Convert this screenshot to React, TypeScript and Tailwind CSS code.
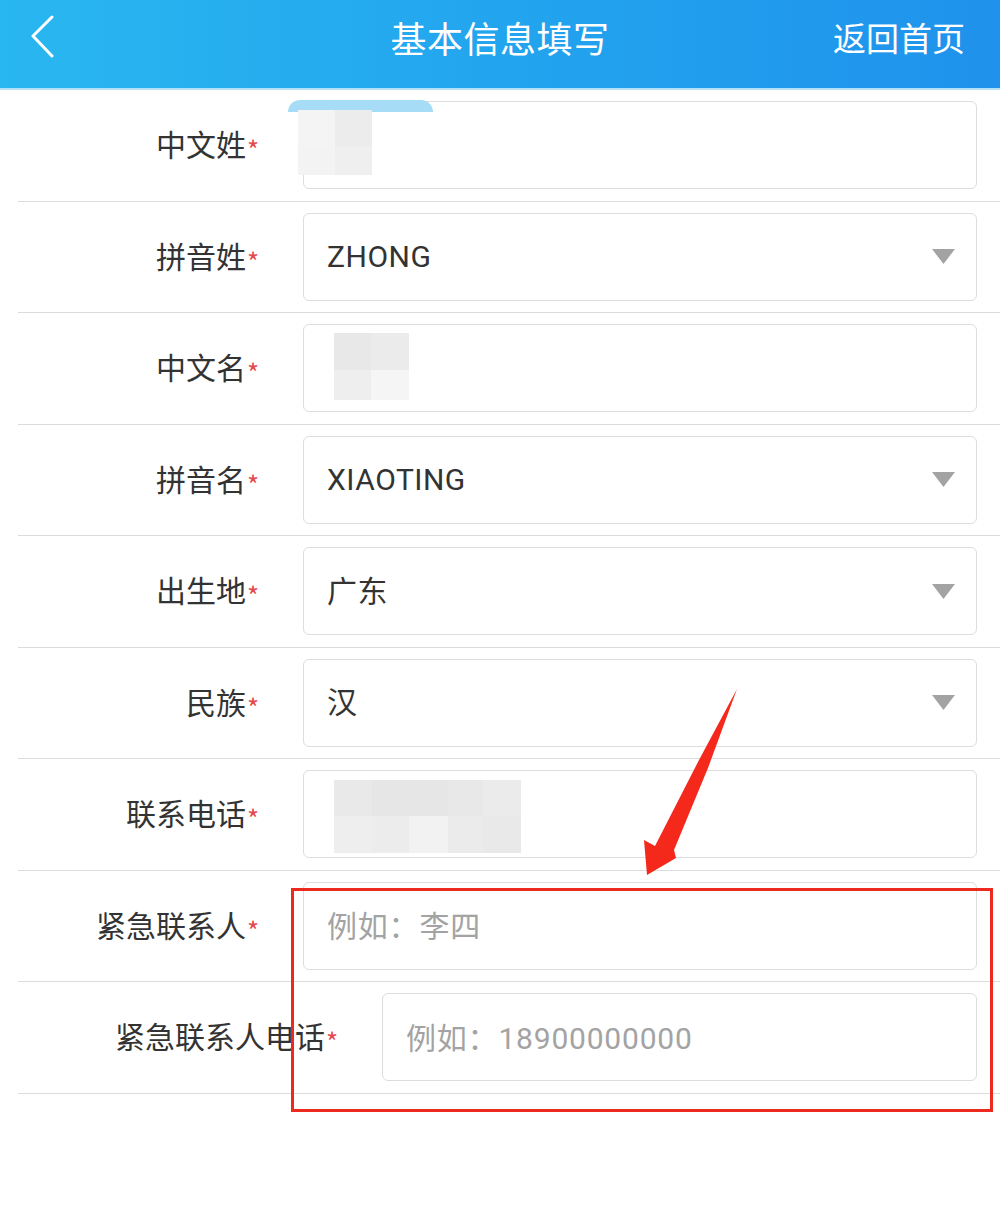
import React from 'react'

type Tile = { x: number; y: number; w: number; h: number; c: string }

interface RowProps {
  label: string
  value?: string
  placeholder?: string
  select?: boolean
  wideLabel?: boolean
  mosaic?: Tile[]
}

// pixelated blur blocks that hide personal data in the screenshot
const surnameMosaic: Tile[] = [
  { x: -16, y: -2, w: 145, h: 12, c: '#a6dcf5' },
  { x: -6, y: 8, w: 37, h: 36, c: '#f4f4f4' },
  { x: 31, y: 8, w: 37, h: 36, c: '#ececec' },
  { x: -6, y: 44, w: 37, h: 29, c: '#f3f3f3' },
  { x: 31, y: 44, w: 37, h: 29, c: '#efefef' },
]

const givenMosaic: Tile[] = [
  { x: 30, y: 8, w: 37, h: 37, c: '#e8e8e8' },
  { x: 67, y: 8, w: 38, h: 37, c: '#ebebeb' },
  { x: 30, y: 45, w: 37, h: 30, c: '#eeeeee' },
  { x: 67, y: 45, w: 38, h: 30, c: '#f5f5f5' },
]

const phoneMosaic: Tile[] = [
  { x: 30, y: 9, w: 38, h: 36, c: '#e9e9e9' },
  { x: 68, y: 9, w: 37, h: 36, c: '#e6e6e6' },
  { x: 105, y: 9, w: 39, h: 36, c: '#e6e6e6' },
  { x: 144, y: 9, w: 35, h: 36, c: '#e8e8e8' },
  { x: 179, y: 9, w: 38, h: 36, c: '#ebebeb' },
  { x: 30, y: 45, w: 38, h: 37, c: '#eeeeee' },
  { x: 68, y: 45, w: 37, h: 37, c: '#ececec' },
  { x: 105, y: 45, w: 39, h: 37, c: '#f2f2f2' },
  { x: 144, y: 45, w: 35, h: 37, c: '#ebebeb' },
  { x: 179, y: 45, w: 38, h: 37, c: '#e9e9e9' },
]

function FormRow({ label, value, placeholder, select, wideLabel, mosaic }: RowProps) {
  return (
    <div className="ml-[18px] h-[111.5px] border-b border-[#dcdcdc] flex items-center">
      <div
        className={
          wideLabel
            ? 'pl-[97px] shrink-0 flex items-center whitespace-nowrap'
            : 'w-[240px] shrink-0 flex items-center justify-end whitespace-nowrap'
        }
      >
        <span className="text-[30px] leading-none text-[#333333] -translate-y-[2px]">{label}</span>
        <span className="w-[12px] pl-[1px] text-[26px] leading-none text-[#e5484d] translate-y-[4px]">*</span>
      </div>
      <div className="relative ml-[45px] mr-[23px] flex-1 h-[88px] border border-[#dddddd] rounded-[6px] flex items-center pl-[23px] pr-[21px]">
        {mosaic &&
          mosaic.map((t, i) => (
            <div
              key={i}
              className="absolute"
              style={{ left: t.x, top: t.y, width: t.w, height: t.h, background: t.c, borderRadius: t.c === '#a6dcf5' ? '30px 30px 0 0' : 0 }}
            />
          ))}
        {value ? (
          <span className="flex-1 text-[30px] text-[#333333] font-['Roboto','Noto_Sans_CJK_SC',sans-serif] tracking-[0.5px]">
            {value}
          </span>
        ) : (
          <span className="flex-1 text-[30px] text-[#a3a3a3] font-['Roboto','Noto_Sans_CJK_SC',sans-serif] tracking-[0.8px] translate-y-[1px]">
            {placeholder}
          </span>
        )}
        {select && (
          <svg width="23" height="15" viewBox="0 0 23 15" className="shrink-0">
            <path d="M0 0 H23 L11.5 15 Z" fill="#a3a3a3" />
          </svg>
        )}
      </div>
    </div>
  )
}

export default function App() {
  return (
    <div className="relative w-[1000px] h-[1220px] bg-white overflow-hidden font-['Noto_Sans_CJK_SC','Noto_Sans',sans-serif]">
      {/* header */}
      <div className="h-[90px] bg-gradient-to-r from-[#29b7f0] to-[#1f92ec] border-b-2 border-[#b3e2f8]">
        <div className="h-[74px] grid grid-cols-[1fr_auto_1fr] items-center text-white">
          <div className="pl-[30px]">
            <svg width="26" height="44" viewBox="0 0 26 44">
              <path d="M22 2 L3 21 L22 41" fill="none" stroke="white" strokeWidth="3" strokeLinecap="round" strokeLinejoin="round" />
            </svg>
          </div>
          <div className="text-[36px] leading-none tracking-[0.5px]">基本信息填写</div>
          <div className="text-[33px] leading-none text-right pr-[35px]">返回首页</div>
        </div>
      </div>

      <FormRow label="中文姓" value=" " mosaic={surnameMosaic} />
      <FormRow label="拼音姓" value="ZHONG" select />
      <FormRow label="中文名" value=" " mosaic={givenMosaic} />
      <FormRow label="拼音名" value="XIAOTING" select />
      <FormRow label="出生地" value="广东" select />
      <FormRow label="民族" value="汉" select />
      <FormRow label="联系电话" value=" " mosaic={phoneMosaic} />
      <FormRow label="紧急联系人" placeholder="例如：李四" />
      <FormRow label="紧急联系人电话" placeholder="例如：18900000000" wideLabel />

      {/* red annotation drawn over the form */}
      <div className="absolute left-[291px] top-[888px] w-[702px] h-[224px] border-[3px] border-[#ee2a1f]" />
      <svg className="absolute left-0 top-0" width="1000" height="1220" viewBox="0 0 1000 1220">
        <polygon
          points="737,689 708,768 674,850 676,858 647,875 644,840 655,846 699,760"
          fill="#f5281c"
        />
      </svg>
    </div>
  )
}
